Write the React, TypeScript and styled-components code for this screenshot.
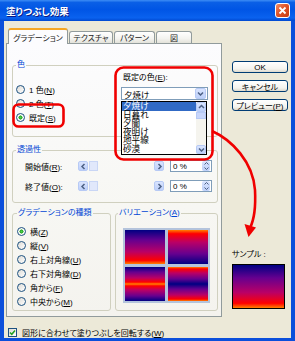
import styled, { createGlobalStyle } from "styled-components";

const GlobalStyle = createGlobalStyle`
  html, body { margin: 0; padding: 0; background: #ffffff; }
  body {
    font-family: "Liberation Sans", "Noto Sans CJK JP", sans-serif;
    font-feature-settings: "palt";
    font-size: 8px;
    color: #000000;
  }
`;

const SUNSET = "#000082 0%, #66008f 30%, #ba0066 64%, #ff0000 89%, #ff8200 100%";

const swatches: Record<string, string> = {
  down: `linear-gradient(to bottom, ${SUNSET})`,
  up: `linear-gradient(to top, ${SUNSET})`,
  center:
    "linear-gradient(to bottom, #000082 0%, #66008f 15%, #ba0066 32%, #ff0000 44.5%, #ff8200 50%, #ff0000 55.5%, #ba0066 68%, #66008f 85%, #000082 100%)",
  edges:
    "linear-gradient(to bottom, #ff8200 0%, #ff0000 5.5%, #ba0066 18%, #66008f 35%, #000082 50%, #66008f 65%, #ba0066 82%, #ff0000 94.5%, #ff8200 100%)",
};

const Window = styled.div`
  position: relative;
  width: 295px;
  height: 341px;
  display: flex;
  flex-direction: column;
  background: #0b4fdb;
  overflow: hidden;
`;

const TitleBar = styled.div`
  height: 21px;
  flex: none;
  display: flex;
  align-items: center;
  justify-content: space-between;
  padding: 0 5px 0 6px;
  background: linear-gradient(
    to bottom,
    #3d8df5 0%,
    #0a5fe6 12%,
    #0055e5 45%,
    #0a62ef 85%,
    #0048d0 100%
  );
`;

const Title = styled.span`
  color: #ffffff;
  font-weight: 700;
  font-size: 9.5px;
  text-shadow: 1px 1px 0 #0a1883;
`;

const CloseButton = styled.div`
  width: 15px;
  height: 15px;
  box-sizing: border-box;
  border: 1px solid #ffffff;
  border-radius: 3px;
  background: linear-gradient(135deg, #f08c68 0%, #e0552a 45%, #c53a12 100%);
  display: flex;
  align-items: center;
  justify-content: center;
`;

const Client = styled.div`
  flex: 1;
  margin: 0 4px 3px;
  background: #ece9d8;
  display: flex;
  gap: 10px;
  padding: 7px 3px 0 2px;
`;

const LeftColumn = styled.div`
  width: 216px;
  display: flex;
  flex-direction: column;
`;

const TabStrip = styled.div`
  height: 15px;
  display: flex;
  align-items: flex-end;
  gap: 1px;
  padding-left: 2px;
`;

const Tab = styled.div<{ $w: number; $active?: boolean }>`
  width: ${(p) => p.$w}px;
  box-sizing: border-box;
  display: flex;
  align-items: center;
  justify-content: center;
  border: 1px solid #919b9c;
  border-bottom: none;
  border-radius: 3px 3px 0 0;
  height: ${(p) => (p.$active ? 16 : 12)}px;
  margin-bottom: ${(p) => (p.$active ? -1 : 0)}px;
  position: relative;
  z-index: ${(p) => (p.$active ? 2 : 1)};
  background: ${(p) =>
    p.$active ? "#fcfcfe" : "linear-gradient(to bottom, #ffffff, #f3f3ef 60%, #e3e2da)"};
  border-top: ${(p) => (p.$active ? "2px solid #f5a623" : "1px solid #919b9c")};
  color: #222222;
`;

const Panel = styled.div`
  height: 274px;
  box-sizing: border-box;
  border: 1px solid #919b9c;
  background: linear-gradient(to bottom, #fcfcfe 0%, #f7f7f3 60%, #f4f3ee 100%);
  padding: 16px 3px 0 5px;
  display: flex;
  flex-direction: column;
`;

const Group = styled.fieldset`
  margin: 0;
  min-width: 0;
  border: 1px solid #d0d0bf;
  border-radius: 3px;
  padding: 0 3px 0 3px;
`;

const Legend = styled.legend`
  color: #0046d5;
  font-size: 8px;
  line-height: 10px;
  padding: 0 1px;
`;

const ColorGroup = styled(Group)`
  padding-right: 9px;
  padding-bottom: 12px;
  display: flex;
`;

const RadioColumn = styled.div`
  flex: 1;
  padding-top: 12px;
  display: flex;
  flex-direction: column;
`;

const RadioRow = styled.label`
  height: 14px;
  display: flex;
  align-items: center;
  gap: 4px;
  white-space: nowrap;
`;

const Caption = styled.span`
  white-space: nowrap;
`;

const Radio = styled.span<{ $checked?: boolean }>`
  width: 9px;
  height: 9px;
  flex: none;
  box-sizing: border-box;
  border-radius: 50%;
  border: 1px solid #1c5180;
  background: ${(p) =>
    p.$checked
      ? "radial-gradient(circle, #4fd24f 0, #21a121 1.8px, #ffffff 2.3px, #ecebe6 100%)"
      : "linear-gradient(135deg, #dcdad5, #ffffff)"};
`;

const PresetArea = styled.div`
  width: 87px;
  padding-top: 3px;
  display: flex;
  flex-direction: column;
  gap: 4px;
`;

const PresetLabel = styled.span`
  line-height: 10px;
  padding-left: 2px;
`;

const ComboWrap = styled.div`
  position: relative;
`;

const Combo = styled.div`
  height: 13px;
  box-sizing: border-box;
  border: 1px solid #7f9db9;
  background: #ffffff;
  display: flex;
  align-items: center;
  justify-content: space-between;
  padding: 0 1px 0 2px;
  font-size: 8.5px;
`;

const ArrowButton = styled.span<{ $w?: number; $h?: number }>`
  width: ${(p) => p.$w ?? 10}px;
  height: ${(p) => p.$h ?? 10}px;
  flex: none;
  box-sizing: border-box;
  border: 1px solid #b7caf5;
  border-radius: 2px;
  background: linear-gradient(to bottom, #d9e4fe, #bdd0fa);
  display: flex;
  align-items: center;
  justify-content: center;
`;

const DropList = styled.div`
  position: absolute;
  top: calc(100% + 1px);
  left: 0;
  width: 86px;
  height: 54px;
  box-sizing: border-box;
  border: 1px solid #000000;
  background: #ffffff;
  display: flex;
  z-index: 3;
`;

const Items = styled.div`
  flex: 1;
  display: flex;
  flex-direction: column;
`;

const Item = styled.div<{ $selected?: boolean }>`
  height: 8.6px;
  flex: none;
  display: flex;
  align-items: center;
  font-size: 8.6px;
  line-height: 1;
  padding-left: 1px;
  background: ${(p) => (p.$selected ? "#316ac5" : "transparent")};
  color: ${(p) => (p.$selected ? "#ffffff" : "#000000")};
`;

const ScrollTrack = styled.div`
  width: 10px;
  background: #f5f4ee;
  display: flex;
  flex-direction: column;
`;

const ScrollGap = styled.div`
  flex: 1;
`;

const Thumb = styled.div`
  width: 10px;
  height: 7px;
  box-sizing: border-box;
  border: 1px solid #b7caf5;
  background: #c8d6fb;
`;

const TransparencyGroup = styled(Group)`
  margin-top: 8px;
  padding-top: 4px;
  padding-bottom: 9px;
  display: flex;
  flex-direction: column;
  gap: 6px;
`;

const SliderRow = styled.div`
  height: 14px;
  margin-left: 9px;
  display: flex;
  align-items: center;
`;

const SliderLabel = styled.span`
  width: 53px;
  flex: none;
`;

const Slider = styled.div`
  width: 86px;
  height: 10px;
  display: flex;
`;

const SliderTrack = styled.div`
  flex: 1;
  display: flex;
  padding-left: 1px;
`;

const SliderThumb = styled.div`
  width: 9px;
  height: 10px;
  box-sizing: border-box;
  border: 1px solid #c9d6f5;
  background: #e1e8fb;
`;

const Spinner = styled.div`
  width: 42px;
  height: 12px;
  margin-left: 6px;
  box-sizing: border-box;
  border: 1px solid #7f9db9;
  background: #ffffff;
  display: flex;
  align-items: center;
  justify-content: space-between;
  padding: 0 1px 0 2px;
`;

const SpinButtons = styled.div`
  width: 8px;
  height: 10px;
  border-radius: 2px;
  background: linear-gradient(to bottom, #d9e4fe, #bdd0fa);
  display: flex;
  flex-direction: column;
  align-items: center;
  justify-content: space-evenly;
`;

const BottomRow = styled.div`
  margin-top: 5px;
  display: flex;
  gap: 4px;
`;

const TypeGroup = styled(Group)`
  width: 99px;
  box-sizing: border-box;
  padding: 6px 2px 2px 4px;
  display: flex;
  flex-direction: column;
`;

const VariationGroup = styled(Group)`
  flex: 1;
  padding: 10px 2px 7px 2px;
`;

const SwatchFrame = styled.div`
  width: 87px;
  height: 75px;
  margin-left: 5px;
  box-sizing: border-box;
  padding: 2px;
  background: #b4c4dc;
  display: grid;
  grid-template-columns: 1fr 1fr;
  grid-template-rows: 1fr 1fr;
  gap: 3px;
`;

const Swatch = styled.div<{ $kind: string }>`
  background: ${(p) => swatches[p.$kind]};
`;

const CheckRow = styled.label`
  margin-top: 10px;
  padding-left: 2px;
  height: 10px;
  display: flex;
  align-items: center;
  gap: 5px;
  white-space: nowrap;
`;

const CheckBox = styled.span`
  width: 9px;
  height: 9px;
  box-sizing: border-box;
  border: 1px solid #1c5180;
  background: linear-gradient(135deg, #dcdad5, #ffffff);
  display: flex;
  align-items: center;
  justify-content: center;
`;

const RightColumn = styled.div`
  width: 56px;
  padding-top: 33px;
  display: flex;
  flex-direction: column;
  gap: 7px;
`;

const Button = styled.div`
  height: 12px;
  box-sizing: border-box;
  border: 1px solid #003c74;
  border-radius: 3px;
  background: linear-gradient(to bottom, #ffffff 0%, #f4f3ee 70%, #dcd8cc 100%);
  display: flex;
  align-items: center;
  justify-content: center;
  white-space: nowrap;
`;

const SampleLabel = styled.span`
  margin-top: 132px;
  line-height: 10px;
`;

const Sample = styled.div`
  width: 53px;
  height: 45px;
  margin-top: -3px;
  box-sizing: border-box;
  border: 1px solid #000000;
  background: ${swatches.down};
`;

const Annotations = styled.svg`
  position: absolute;
  left: 0;
  top: 0;
  pointer-events: none;
  z-index: 10;
`;

const K = styled.u`
  text-decoration: underline;
  text-underline-offset: 1px;
`;

const Chevron = ({ dir = "down" }: { dir?: "down" | "up" | "left" | "right" }) => {
  const d = {
    down: "M1 1.5 L3.5 4 L6 1.5",
    up: "M1 4 L3.5 1.5 L6 4",
    left: "M4.5 1 L2 3.5 L4.5 6",
    right: "M2.5 1 L5 3.5 L2.5 6",
  }[dir];
  const vertical = dir === "down" || dir === "up";
  return (
    <svg width="7" height={vertical ? 5.5 : 7} viewBox={vertical ? "0 0 7 5.5" : "0 0 7 7"}>
      <path d={d} fill="none" stroke="#4d6185" strokeWidth="1.5" />
    </svg>
  );
};

const Tiny = ({ dir }: { dir: "up" | "down" }) => (
  <svg width="5" height="3" viewBox="0 0 5 3">
    <path
      d={dir === "up" ? "M0.5 2.5 L2.5 0.5 L4.5 2.5" : "M0.5 0.5 L2.5 2.5 L4.5 0.5"}
      fill="none"
      stroke="#4d6185"
      strokeWidth="1"
    />
  </svg>
);

const presets = ["夕焼け", "日暮れ", "夕闇", "夜明け", "地平線", "砂漠"];

const types: [string, string, boolean][] = [
  ["横", "Z", true],
  ["縦", "V", false],
  ["右上対角線", "U", false],
  ["右下対角線", "D", false],
  ["角から", "F", false],
  ["中央から", "M", false],
];

const SliderField = ({ label, k }: { label: string; k: string }) => (
  <SliderRow>
    <SliderLabel>
      {label}(<K>{k}</K>):
    </SliderLabel>
    <Slider>
      <ArrowButton>
        <Chevron dir="left" />
      </ArrowButton>
      <SliderTrack>
        <SliderThumb />
      </SliderTrack>
      <ArrowButton>
        <Chevron dir="right" />
      </ArrowButton>
    </Slider>
    <Spinner>
      <span>0 %</span>
      <SpinButtons>
        <Tiny dir="up" />
        <Tiny dir="down" />
      </SpinButtons>
    </Spinner>
  </SliderRow>
);

export default function App() {
  return (
    <>
      <GlobalStyle />
      <Window>
        <TitleBar>
          <Title>塗りつぶし効果</Title>
          <CloseButton>
            <svg width="9" height="9" viewBox="0 0 9 9">
              <path d="M1.5 1.5 L7.5 7.5 M7.5 1.5 L1.5 7.5" stroke="#ffffff" strokeWidth="1.8" />
            </svg>
          </CloseButton>
        </TitleBar>
        <Client>
          <LeftColumn>
            <TabStrip>
              <Tab $w={60} $active>
                グラデーション
              </Tab>
              <Tab $w={44}>テクスチャ</Tab>
              <Tab $w={41}>パターン</Tab>
              <Tab $w={36}>図</Tab>
            </TabStrip>
            <Panel>
              <ColorGroup>
                <Legend>色</Legend>
                <RadioColumn>
                  <RadioRow>
                    <Radio />
                    <Caption>
                      1 色(<K>N</K>)
                    </Caption>
                  </RadioRow>
                  <RadioRow>
                    <Radio />
                    <Caption>
                      2 色(<K>T</K>)
                    </Caption>
                  </RadioRow>
                  <RadioRow>
                    <Radio $checked />
                    <Caption>
                      既定(<K>S</K>)
                    </Caption>
                  </RadioRow>
                </RadioColumn>
                <PresetArea>
                  <PresetLabel>
                    既定の色(<K>E</K>):
                  </PresetLabel>
                  <ComboWrap>
                    <Combo>
                      <span>夕焼け</span>
                      <ArrowButton $w={11} $h={11}>
                        <Chevron />
                      </ArrowButton>
                    </Combo>
                    <DropList>
                      <Items>
                        {presets.map((p, i) => (
                          <Item key={p} $selected={i === 0}>
                            {p}
                          </Item>
                        ))}
                      </Items>
                      <ScrollTrack>
                        <ArrowButton>
                          <Chevron dir="up" />
                        </ArrowButton>
                        <Thumb />
                        <ScrollGap />
                        <ArrowButton $h={9}>
                          <Chevron />
                        </ArrowButton>
                      </ScrollTrack>
                    </DropList>
                  </ComboWrap>
                </PresetArea>
              </ColorGroup>

              <TransparencyGroup>
                <Legend>透過性</Legend>
                <SliderField label="開始値" k="R" />
                <SliderField label="終了値" k="O" />
              </TransparencyGroup>

              <BottomRow>
                <TypeGroup>
                  <Legend>グラデーションの種類</Legend>
                  {types.map(([t, k, c]) => (
                    <RadioRow key={t}>
                      <Radio $checked={c} />
                      <Caption>
                        {t}(<K>{k}</K>)
                      </Caption>
                    </RadioRow>
                  ))}
                </TypeGroup>
                <VariationGroup>
                  <Legend>
                    バリエーション(<K>A</K>)
                  </Legend>
                  <SwatchFrame>
                    <Swatch $kind="down" />
                    <Swatch $kind="up" />
                    <Swatch $kind="center" />
                    <Swatch $kind="edges" />
                  </SwatchFrame>
                </VariationGroup>
              </BottomRow>
            </Panel>
            <CheckRow>
              <CheckBox>
                <svg width="7" height="7" viewBox="0 0 7 7">
                  <path d="M1 3.5 L2.8 5.3 L6 1.5" fill="none" stroke="#21a121" strokeWidth="1.5" />
                </svg>
              </CheckBox>
              <Caption>
                図形に合わせて塗りつぶしを回転する(<K>W</K>)
              </Caption>
            </CheckRow>
          </LeftColumn>

          <RightColumn>
            <Button>OK</Button>
            <Button>キャンセル</Button>
            <Button>
              <span>
                プレビュー(<K>P</K>)
              </span>
            </Button>
            <SampleLabel>サンプル :</SampleLabel>
            <Sample />
          </RightColumn>
        </Client>

        <Annotations width="295" height="341" viewBox="0 0 295 341">
          <rect x="13.5" y="104.5" width="50" height="22" rx="5" fill="none" stroke="#f00000" strokeWidth="2.6" />
          <rect x="115.5" y="67.5" width="97" height="92" rx="8" fill="none" stroke="#f00000" strokeWidth="2.6" />
          <path d="M212 131 C232 140 253 162 255 190 C256 210 254 220 250 228" fill="none" stroke="#f00000" strokeWidth="2.6" />
          <polygon points="244.5,224 256,227.5 248.5,237" fill="#f00000" />
        </Annotations>
      </Window>
    </>
  );
}
